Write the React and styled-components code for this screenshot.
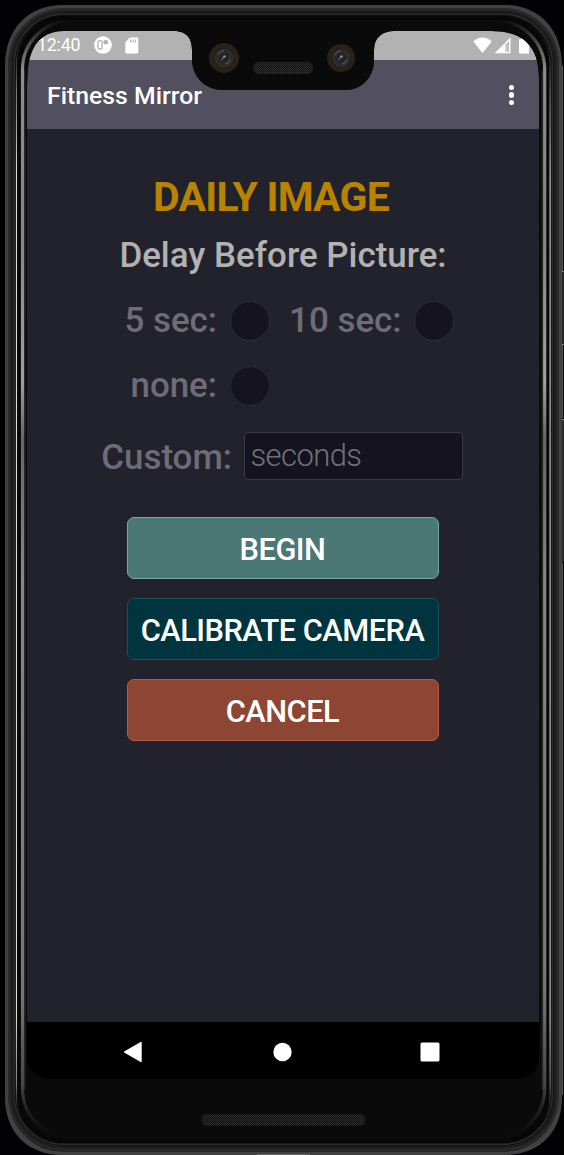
import React from "react";
import styled, { createGlobalStyle } from "styled-components";

const GlobalStyle = createGlobalStyle`
  * { box-sizing: border-box; }
  body { margin: 0; background: #020204; font-family: Roboto, "Liberation Sans", sans-serif; }
`;

const Device = styled.div`
  position: relative;
  width: 564px;
  height: 1155px;
  padding: 30px 25px 76px 27px;
  overflow: hidden;
`;

const FrameArt = styled.svg`
  position: absolute;
  inset: 0;
  pointer-events: none;
`;

const Screen = styled.div`
  display: flex;
  flex-direction: column;
  width: 512px;
  height: 1049px;
  background: #22222d;
`;

const StatusBar = styled.header`
  display: flex;
  align-items: center;
  justify-content: space-between;
  flex: none;
  height: 30px;
  padding: 0 9px 0 10px;
  background: #b2b2b2;
  color: #fff;
`;

const StatusGroup = styled.div`
  display: flex;
  align-items: center;
  gap: ${(p) => p.$gap}px;
`;

const Clock = styled.span`
  font-size: 17.8px;
  line-height: 30px;
  letter-spacing: -0.2px;
  width: 44px;
  white-space: nowrap;
`;

const AppBar = styled.div`
  display: flex;
  align-items: center;
  justify-content: space-between;
  flex: none;
  height: 69px;
  padding: 1px 25px 0 20px;
  background: #52505f;
  color: #fff;
`;

const AppTitle = styled.h1`
  margin: 0;
  padding-top: 2px;
  font-size: 24.8px;
  font-weight: 500;
  line-height: 30px;
`;

const MenuButton = styled.button`
  display: flex;
  flex-direction: column;
  align-items: center;
  gap: 2.3px;
  padding: 0;
  border: 0;
  background: none;
`;

const Dot = styled.span`
  width: 5.4px;
  height: 5.4px;
  border-radius: 50%;
  background: #fff;
`;

const Content = styled.main`
  flex: 1;
  display: flex;
  flex-direction: column;
  align-items: center;
  padding-top: 44px;
`;

const Heading = styled.h2`
  margin: 0 24px 0 0;
  color: #b88300;
  font-size: 41px;
  font-weight: 700;
  line-height: 48px;
  letter-spacing: -0.8px;
`;

const SubHeading = styled.h3`
  margin: 14px 0 0;
  color: #b2b2b2;
  font-size: 34.9px;
  font-weight: 500;
  line-height: 42px;
`;

const DelayGrid = styled.div`
  display: grid;
  grid-template-columns: 93px 40px 119.5px 40px;
  grid-template-rows: 40px 40px;
  column-gap: 12.5px;
  row-gap: 25px;
  align-items: center;
  align-self: flex-start;
  margin: 23.5px 0 0.5px 97px;
`;

const Label = styled.label`
  color: #6d6c77;
  font-size: 34.9px;
  font-weight: 500;
  line-height: 40px;
  text-align: right;
  white-space: nowrap;
`;

const Radio = styled.span`
  width: 40px;
  height: 40px;
  border: 1px solid #2c2b38;
  border-radius: 50%;
  background: #15131f;
`;

const CustomRow = styled.div`
  display: flex;
  align-items: center;
  align-self: flex-start;
  gap: 12px;
  margin: 26px 0 0 74px;
  ${Label} { width: 131px; padding-top: 3px; }
`;

const SecondsInput = styled.input`
  width: 219px;
  height: 48px;
  padding: 0 6px 2px 5.5px;
  border: 1px solid #3b3945;
  border-radius: 4px;
  background: #15131f;
  color: #fff;
  font: 300 31px Roboto, sans-serif;
  letter-spacing: -0.6px;
  outline: 0;
  &::placeholder { color: #72717b; opacity: 1; }
`;

const Actions = styled.div`
  display: flex;
  flex-direction: column;
  gap: 19px;
  width: 312px;
  margin-top: 37px;
`;

const ActionButton = styled.button`
  height: 62px;
  padding: 2px 1px 0 0;
  border: 1px solid ${(p) => p.$border};
  border-radius: 7px;
  background: ${(p) => p.$color};
  color: #fff;
  font: 500 30.8px Roboto, sans-serif;
  letter-spacing: -0.5px;
  white-space: nowrap;
`;

const NavBar = styled.nav`
  display: flex;
  align-items: center;
  justify-content: space-between;
  flex: none;
  height: 57px;
  padding: 2px 99px 0 96px;
  background: #000;
`;

const screenEdge =
  "M27 95C27 74 28 62 31 54C36 39 47 31 64 31H174C188 31 192 40 192 50V60C193 79 207 90 223 90H345C362 90 374 77 374 60V50C374 37 383 31 394 31H491C510 31 523 36 530 46C537 55 539 66 539 80V1060Q537 1075 520 1079H46Q29 1075 27 1060Z";

function CameraLens({ x, y, r }) {
  return (
    <g transform={`translate(${x} ${y})`}>
      <circle r={r} fill="#292219" />
      <circle r={r * 0.66} fill="#1a1a1b" />
      <circle r={r * 0.58} fill="#29292b" stroke="#333537" strokeWidth="1.2" />
      <circle r={r * 0.3} fill="#222123" />
      <path d="M-6 -3Q-4 -7 0 -7M1 6Q5 5 6 1" fill="none" stroke="#505354" strokeWidth="1.2" />
      <path d="M-2.5 2L.5 -2" stroke="#68594f" strokeWidth="1.5" />
      <circle cx=".5" cy="-1.5" r="1.2" fill="#9a908d" />
    </g>
  );
}

function DeviceFrame() {
  return (
    <FrameArt width="564" height="1155" viewBox="0 0 564 1155" aria-hidden="true">
      <defs>
        <linearGradient id="rail" x1="0" y1="0" x2="0" y2="1155" gradientUnits="userSpaceOnUse">
          <stop offset=".017" stopColor="#999" stopOpacity="0" />
          <stop offset=".06" stopColor="#8d8d8d" />
          <stop offset=".2" stopColor="#858585" />
          <stop offset=".33" stopColor="#a0a0a0" />
          <stop offset=".38" stopColor="#666" />
          <stop offset=".5" stopColor="#858585" />
          <stop offset=".86" stopColor="#777" />
          <stop offset=".94" stopColor="#45454a" />
          <stop offset=".985" stopColor="#222" stopOpacity="0" />
        </linearGradient>
        <linearGradient id="glint" x1="0" y1="0" x2="0" y2="1155" gradientUnits="userSpaceOnUse">
          <stop offset=".02" stopColor="#333" stopOpacity="0" />
          <stop offset=".08" stopColor="#777" />
          <stop offset=".15" stopColor="#ddd" />
          <stop offset=".88" stopColor="#ddd" />
          <stop offset=".94" stopColor="#777" />
          <stop offset=".97" stopColor="#222" stopOpacity="0" />
        </linearGradient>
        <pattern id="mesh" width="2" height="2" patternUnits="userSpaceOnUse">
          <rect width="2" height="2" fill="#111" />
          <rect width="1" height="1" fill="#343434" />
          <rect x="1" y="1" width="1" height="1" fill="#282828" />
        </pattern>
        <clipPath id="body">
          <path
            clipRule="evenodd"
            d={`M63 5H504C540 5 562 30 562 66V1097C562 1132 540 1155 504 1155H63C27 1155 5 1132 5 1097V66C5 30 27 5 63 5Z${screenEdge}`}
          />
        </clipPath>
      </defs>
      <path
        fill="#020204"
        fillRule="evenodd"
        d={`M0 0H564V1155H0Z${screenEdge}`}
      />
      <g clipPath="url(#body)">
        <rect width="564" height="1155" fill="#0a0a0a" />
        <rect x="5.5" y="5.5" width="556" height="1149" rx="58" fill="none" stroke="#414141" strokeWidth="6" />
        <rect x="9.5" y="9.5" width="548" height="1140" rx="54" fill="none" stroke="#2a2a2a" strokeWidth="3" />
        <rect x="12" y="12" width="543" height="1135" rx="51" fill="none" stroke="#1d1d1d" strokeWidth="3" />
        <rect x="14.3" y="14.3" width="538" height="1130" rx="49" fill="none" stroke="#2d2d2d" strokeWidth="1.5" />
        <rect x="16.5" y="17" width="533.5" height="1126" rx="47" fill="none" stroke="url(#glint)" strokeWidth="1.2" />
        <rect x="19" y="18" width="528.5" height="1123" rx="46" fill="none" stroke="#070707" strokeWidth="3.5" />
        <rect x="22.5" y="20.5" width="522.2" height="1117" rx="49" fill="none" stroke="url(#rail)" strokeWidth="3.2" />
        <path d="M24.8 70V1090M542.2 70V1090" stroke="#333" strokeWidth="1" />
      </g>
      <path d="M563 0V272M563.5 344V418M563.5 562V1155" stroke="#030303" strokeWidth="2" />
      <rect x="562" y="272" width="2" height="72" fill="#272727" />
      <rect x="562" y="419" width="2" height="143" fill="#292929" />
      <path d="M562 271.5H564M562 344.5H564M562 419.5H564" stroke="#888" />
      <path d="M562.5 66V271M562.5 345V418M562.5 563V1095" stroke="#555" strokeWidth="1" />
      <CameraLens x={224} y={58} r={15} />
      <CameraLens x={341} y={58} r={14} />
      <rect x="254" y="62.5" width="58.5" height="11" rx="4.5" fill="url(#mesh)" stroke="#222" />
      <rect x="202" y="1114.5" width="163" height="11" rx="4.5" fill="url(#mesh)" stroke="#181818" />
      <path d="M257 1154.5H310" stroke="#666" />
    </FrameArt>
  );
}

export default function App() {
  return (
    <>
      <GlobalStyle />
      <Device>
        <Screen>
          <StatusBar>
            <StatusGroup $gap={13}>
              <Clock>12:40</Clock>
              <svg width="18" height="18" viewBox="0 0 18 18">
                <circle cx="9" cy="9" r="8.8" fill="#fff" />
                <rect x="4" y="4.6" width="4" height="8.4" rx="1.6" fill="#fff" stroke="#b2b2b2" strokeWidth="1.3" />
                <rect x="9.4" y="4.2" width="4.6" height="4" rx="1.2" fill="#b2b2b2" />
              </svg>
              <svg width="14" height="17" viewBox="0 0 14 17">
                <path d="M5 .5H12Q13.3 .5 13.3 1.8V15Q13.3 16.4 12 16.4H1.6Q.3 16.4 .3 15V5.2Z" fill="#fff" />
                <path d="M5.8 2.5V5.5M8.2 2.5V5.5M10.6 2.5V5.5" stroke="#b2b2b2" strokeWidth="1.2" />
              </svg>
            </StatusGroup>
            <StatusGroup $gap={1.5}>
              <svg width="19" height="17" viewBox="0 0 19 17">
                <path d="M.2 4.4Q9.5-3.4 18.8 4.4L9.5 16Z" fill="#fff" />
              </svg>
              <svg width="17" height="17" viewBox="0 0 17 17">
                <path d="M16.5 .5V16.3H.5Z" fill="#fff" />
                <path d="M15 4.2V14.8H11.4V7.8Z" fill="#b2b2b2" />
                <path d="M12.6 8H13.9V14H12.6Z" fill="#b2b2b2" stroke="#fff" strokeWidth=".4" />
              </svg>
              <svg width="18" height="17" viewBox="0 0 18 17">
                <path d="M7 2.2H10V.5H14V2.2H17V16.4H7Z" fill="#fff" />
              </svg>
            </StatusGroup>
          </StatusBar>
          <AppBar>
            <AppTitle>Fitness Mirror</AppTitle>
            <MenuButton aria-label="More options">
              <Dot />
              <Dot />
              <Dot />
            </MenuButton>
          </AppBar>
          <Content>
            <Heading>DAILY IMAGE</Heading>
            <SubHeading>Delay Before Picture:</SubHeading>
            <DelayGrid>
              <Label>5 sec:</Label>
              <Radio />
              <Label>10 sec:</Label>
              <Radio />
              <Label>none:</Label>
              <Radio />
            </DelayGrid>
            <CustomRow>
              <Label>Custom:</Label>
              <SecondsInput placeholder="seconds" />
            </CustomRow>
            <Actions>
              <ActionButton $color="#4b7775" $border="#75aaa0">BEGIN</ActionButton>
              <ActionButton $color="#003540" $border="#194e5b">CALIBRATE CAMERA</ActionButton>
              <ActionButton $color="#8e4634" $border="#b55b43">CANCEL</ActionButton>
            </Actions>
          </Content>
          <NavBar>
            <svg width="20" height="22" viewBox="0 0 20 22">
              <path d="M18 1.5V20.5L1.5 11Z" fill="#fff" stroke="#fff" strokeWidth="1.4" strokeLinejoin="round" />
            </svg>
            <svg width="20" height="20" viewBox="0 0 20 20">
              <circle cx="10.5" cy="10" r="9.2" fill="#fff" />
            </svg>
            <svg width="20" height="20" viewBox="0 0 20 20">
              <rect x=".5" y=".5" width="19" height="19" rx="1.5" fill="#fff" />
            </svg>
          </NavBar>
        </Screen>
        <DeviceFrame />
      </Device>
    </>
  );
}
